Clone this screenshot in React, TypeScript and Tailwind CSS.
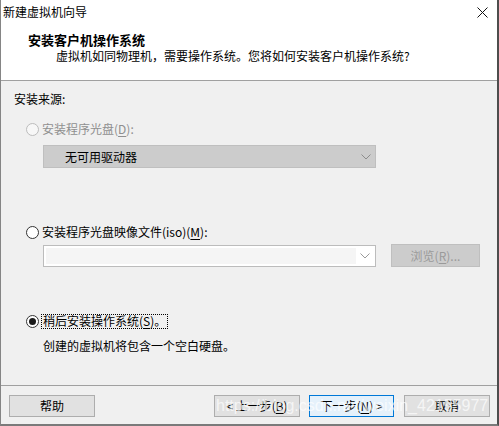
import type { ReactNode } from "react";

const font = { fontFamily: '"Noto Sans CJK SC", "Microsoft YaHei", sans-serif' };

function Key({ k }: { k: string }) {
  return <span className="underline underline-offset-2">{k}</span>;
}

function Radio({ checked, disabled }: { checked?: boolean; disabled?: boolean }) {
  return (
    <span
      className={`flex h-[13px] w-[13px] shrink-0 items-center justify-center rounded-full border ${
        disabled ? "border-[#bcbcbc] bg-[#f7f7f7]" : "border-[#333333] bg-white"
      }`}
    >
      {checked && <span className="h-[7px] w-[7px] rounded-full bg-[#1a1a1a]" />}
    </span>
  );
}

function Chevron({ color }: { color: string }) {
  return (
    <svg width="10" height="6" viewBox="0 0 10 6" fill="none">
      <path d="M0.5 0.5 L5 5 L9.5 0.5" stroke={color} strokeWidth="1" />
    </svg>
  );
}

function Button({
  children,
  className = "",
  focused,
}: {
  children: ReactNode;
  className?: string;
  focused?: boolean;
}) {
  return (
    <div
      className={`flex h-[22px] items-center justify-center border text-[12px] leading-none text-black ${
        focused ? "border-[#0078d7] bg-[#e5f1fb]" : "border-[#adadad] bg-[#e1e1e1]"
      } ${className}`}
    >
      {children}
    </div>
  );
}

export default function App() {
  return (
    <div
      style={font}
      className="relative flex h-[426px] w-[499px] flex-col overflow-hidden border-l border-b-2 border-r-2 border-l-[#858585] border-b-[#7a7a7a] border-r-[#4d4d4d] bg-[#f0f0f0] text-[12px] text-black"
    >
      {/* header */}
      <div className="h-[81px] shrink-0 border-b border-[#a0a0a0] bg-white">
        <div className="flex h-[24px] items-center justify-between pl-[2px] pr-[9px]">
          <span className="leading-none">新建虚拟机向导</span>
          <svg width="11" height="11" viewBox="0 0 11 11" fill="none">
            <path d="M0.5 0.5 L10.5 10.5 M10.5 0.5 L0.5 10.5" stroke="#111" strokeWidth="1" />
          </svg>
        </div>
        <div className="mt-[7px] flex h-[16px] items-center pl-[27px] text-[13px] font-bold leading-none">
          安装客户机操作系统
        </div>
        <div className="mt-[1px] flex h-[16px] items-center pl-[55px] leading-none">
          虚拟机如同物理机，需要操作系统。您将如何安装客户机操作系统?
        </div>
      </div>

      {/* body */}
      <div className="h-[304px] shrink-0">
        <div className="mt-[10px] flex h-[16px] items-center pl-[13px] leading-none">安装来源:</div>

        <div className="mt-[14px] flex h-[16px] items-center gap-[3px] pl-[25px] leading-none text-[#8f8f8f]">
          <Radio disabled />
          <span>
            安装程序光盘(<Key k="D" />):
          </span>
        </div>
        <div className="ml-[42px] mt-[8px] flex h-[23px] w-[333px] items-center justify-between border border-[#bfbfbf] bg-[#cccccc] pl-[21px] pr-[4px] leading-none">
          <span>无可用驱动器</span>
          <Chevron color="#8c8c8c" />
        </div>

        <div className="mt-[56px] flex h-[16px] items-center gap-[3px] pl-[25px] leading-none">
          <Radio />
          <span>
            安装程序光盘映像文件(iso)(<Key k="M" />):
          </span>
        </div>
        <div className="mt-[4px] flex h-[23px] items-start pl-[42px]">
          <div className="mt-[1px] flex h-[22px] w-[333px] border border-[#bcbcbc] bg-white p-[2px]">
            <div className="h-full w-[310px] bg-[#f5f5f5]" />
            <div className="flex flex-1 items-center justify-center">
              <Chevron color="#9a9a9a" />
            </div>
          </div>
          <div className="ml-[15px] flex h-[23px] w-[89px] items-center justify-center border border-[#bfbfbf] bg-[#cccccc] leading-none text-[#9a9a9a]">
            浏览(<Key k="R" />)...
          </div>
        </div>

        <div className="mt-[46px] flex h-[16px] items-center gap-[2px] pl-[25px] leading-none">
          <Radio checked />
          <span className="flex h-[15px] items-center border border-dotted border-black px-[1px]">
            稍后安装操作系统(<Key k="S" />)。
          </span>
        </div>
        <div className="mt-[9px] flex h-[16px] items-center pl-[42px] leading-none">
          创建的虚拟机将包含一个空白硬盘。
        </div>
      </div>

      {/* footer */}
      <div className="relative flex h-[39px] shrink-0 items-start border-t border-[#a0a0a0] pl-[8px] pt-[9px]">
        <Button className="w-[86px]">帮助</Button>
        <Button className="ml-[119px] w-[86px]">
          &lt; 上一步(<Key k="B" />)
        </Button>
        <Button focused className="ml-[9px] w-[85px]">
          下一步(<Key k="N" />) &gt;
        </Button>
        <Button className="ml-[10px] w-[86px]">取消</Button>
        <div
          className="pointer-events-none absolute left-[215px] top-[10px] whitespace-nowrap text-[16px] leading-[20px] text-white/70"
          style={{ fontFamily: '"Liberation Sans", Arial, sans-serif' }}
        >
          https://blog.csdn.net/weixin_42155977
        </div>
      </div>
    </div>
  );
}
